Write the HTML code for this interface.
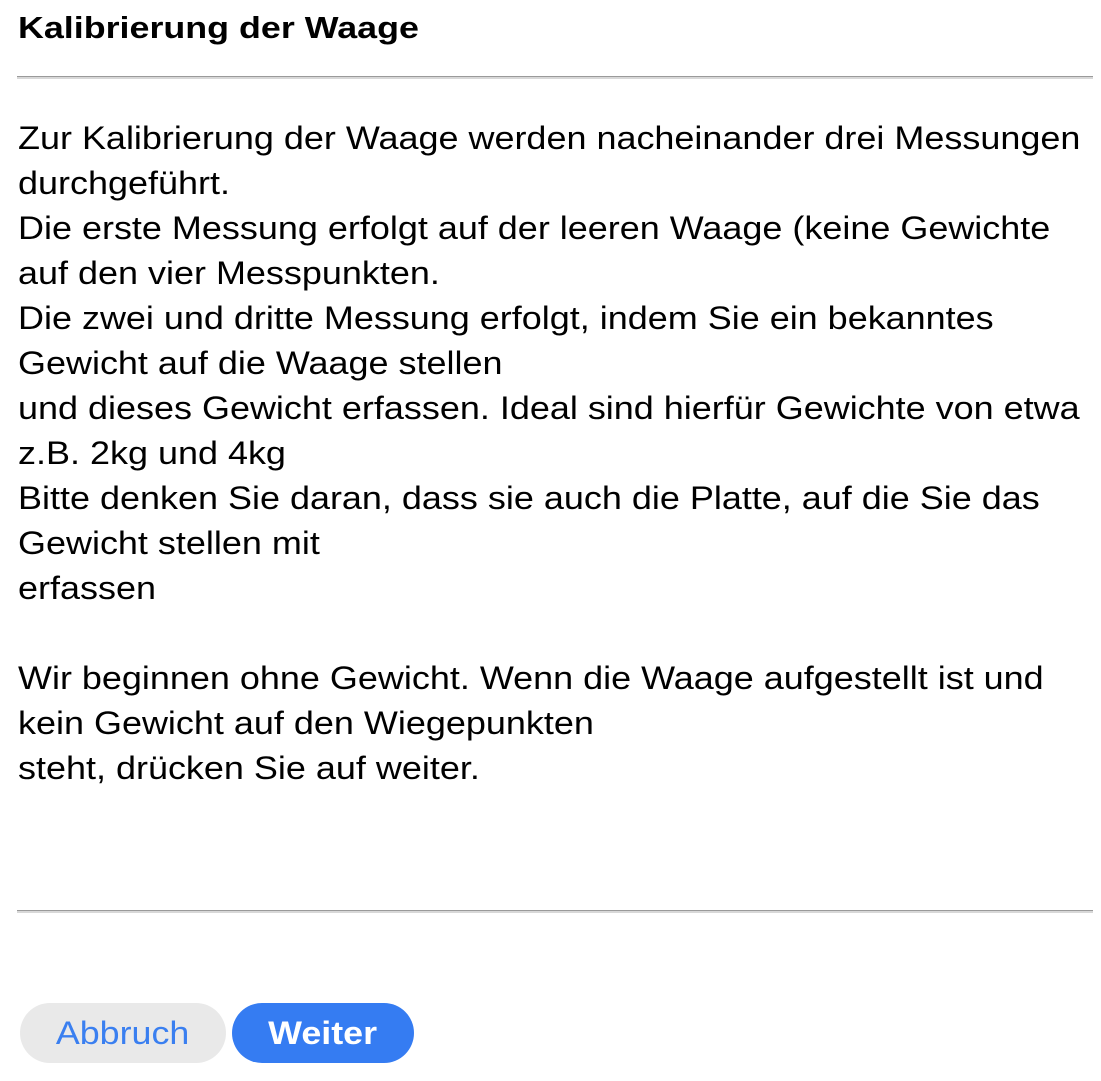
<!DOCTYPE html>
<html><head><meta charset="utf-8"><style>
body{margin:0;width:1101px;height:1081px;background:#fff;font-family:"Liberation Sans",Arial,sans-serif;color:#000;position:relative;overflow:hidden}
.t{position:absolute;left:18px;top:8px;font-size:31px;font-weight:bold;line-height:40px;white-space:nowrap;transform:scaleX(1.156);transform-origin:0 0}
.hr{position:absolute;left:17px;width:1076px;height:1px;background:#9a9a9a;border-bottom:2px solid #d8d8d8}
.b{position:absolute;left:18px;top:116px;font-size:32px;line-height:45px;white-space:nowrap;transform:scaleX(1.124);transform-origin:0 0}
.btn{position:absolute;top:1003px;height:60px;border-radius:30px;font-size:32px;line-height:60px;text-align:center}
.btn span{display:inline-block;transform:scaleX(1.12)}
</style></head><body>
<div class="t">Kalibrierung der Waage</div>
<div class="hr" style="top:76px"></div>
<div class="b">Zur Kalibrierung der Waage werden nacheinander drei Messungen<br>durchgeführt.<br>Die erste Messung erfolgt auf der leeren Waage (keine Gewichte<br>auf den vier Messpunkten.<br>Die zwei und dritte Messung erfolgt, indem Sie ein bekanntes<br>Gewicht auf die Waage stellen<br>und dieses Gewicht erfassen. Ideal sind hierfür Gewichte von etwa<br>z.B. 2kg und 4kg<br>Bitte denken Sie daran, dass sie auch die Platte, auf die Sie das<br>Gewicht stellen mit<br>erfassen<br><br>Wir beginnen ohne Gewicht. Wenn die Waage aufgestellt ist und<br>kein Gewicht auf den Wiegepunkten<br>steht, drücken Sie auf weiter.</div>
<div class="hr" style="top:910px"></div>
<div class="btn" style="left:20px;width:206px;background:#e9e9e9;color:#3a7ff0"><span>Abbruch</span></div>
<div class="btn" style="left:232px;width:182px;background:#357cf2;color:#fff;font-weight:bold"><span>Weiter</span></div>
</body></html>
